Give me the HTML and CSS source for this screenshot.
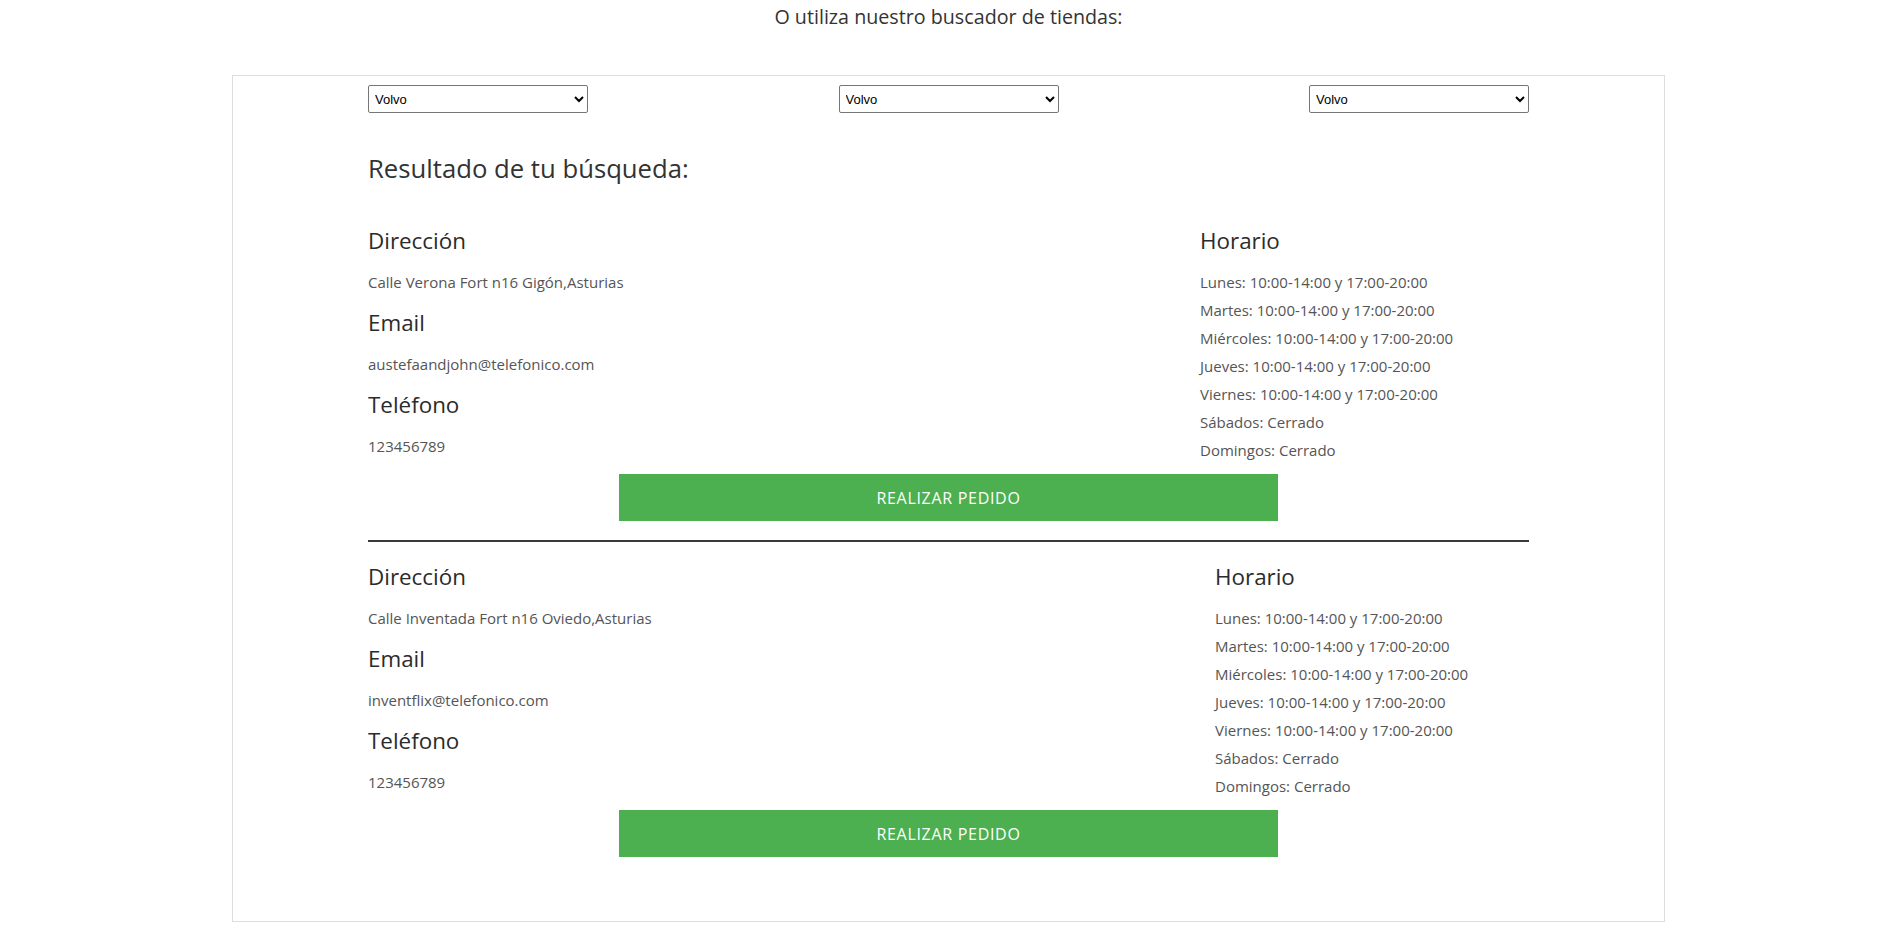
FILE: index.html
```html
<!DOCTYPE html>
<html lang="es">
<head>
<meta charset="utf-8">
<title>Buscador de tiendas</title>
<link rel="stylesheet" href="styles.css">
</head>
<body>
  <p class="intro">O utiliza nuestro buscador de tiendas:</p>
  <section class="finder">
    <div class="finder-inner">
      <div class="filters">
        <select class="filter"><option>Volvo</option><option>Saab</option></select>
        <select class="filter"><option>Volvo</option><option>Saab</option></select>
        <select class="filter"><option>Volvo</option><option>Saab</option></select>
      </div>
      <h2 class="results-title">Resultado de tu búsqueda:</h2>

      <article class="store">
        <div class="store-row">
          <div class="store-info">
            <h3 class="label">Dirección</h3>
            <p class="value">Calle Verona Fort n16 Gigón,Asturias</p>
            <h3 class="label">Email</h3>
            <p class="value">austefaandjohn@telefonico.com</p>
            <h3 class="label">Teléfono</h3>
            <p class="value">123456789</p>
          </div>
          <div class="store-hours">
            <h3 class="label">Horario</h3>
            <p class="value">Lunes: 10:00-14:00 y 17:00-20:00</p>
            <p class="value">Martes: 10:00-14:00 y 17:00-20:00</p>
            <p class="value">Miércoles: 10:00-14:00 y 17:00-20:00</p>
            <p class="value">Jueves: 10:00-14:00 y 17:00-20:00</p>
            <p class="value">Viernes: 10:00-14:00 y 17:00-20:00</p>
            <p class="value">Sábados: Cerrado</p>
            <p class="value">Domingos: Cerrado</p>
          </div>
        </div>
        <button class="order-btn" type="button">REALIZAR PEDIDO</button>
      </article>

      <hr class="divider">

      <article class="store store--wide">
        <div class="store-row">
          <div class="store-info">
            <h3 class="label">Dirección</h3>
            <p class="value">Calle Inventada Fort n16 Oviedo,Asturias</p>
            <h3 class="label">Email</h3>
            <p class="value">inventflix@telefonico.com</p>
            <h3 class="label">Teléfono</h3>
            <p class="value">123456789</p>
          </div>
          <div class="store-hours">
            <h3 class="label">Horario</h3>
            <p class="value">Lunes: 10:00-14:00 y 17:00-20:00</p>
            <p class="value">Martes: 10:00-14:00 y 17:00-20:00</p>
            <p class="value">Miércoles: 10:00-14:00 y 17:00-20:00</p>
            <p class="value">Jueves: 10:00-14:00 y 17:00-20:00</p>
            <p class="value">Viernes: 10:00-14:00 y 17:00-20:00</p>
            <p class="value">Sábados: Cerrado</p>
            <p class="value">Domingos: Cerrado</p>
          </div>
        </div>
        <button class="order-btn" type="button">REALIZAR PEDIDO</button>
      </article>
    </div>
  </section>
</body>
</html>
```

FILE: styles.css
```css
* {
  box-sizing: border-box;
}

body {
  margin: 0;
  padding-right: 4px;
  background: #fff;
  font-family: "Open Sans", "Noto Sans", sans-serif;
  color: #333;
}

.intro {
  margin: 0;
  height: 34px;
  line-height: 34px;
  text-align: center;
  font-size: 19.7px;
  color: #333;
}

.finder {
  width: 1433px;
  margin: 41px auto 0;
  border: 1px solid #ddd;
  padding: 9px 135px 64px;
}

.finder-inner {
  display: flex;
  flex-direction: column;
}

.filters {
  display: flex;
  justify-content: space-between;
}

.filter {
  width: 220px;
  height: 28px;
  font-family: "Liberation Sans", Arial, sans-serif;
  font-size: 13px;
  color: #000;
  background: #fff;
  border: 1px solid #767676;
  border-radius: 2px;
  padding: 0 2px;
}

.results-title {
  margin: 38px 0 0;
  line-height: 36px;
  font-size: 25.7px;
  font-weight: 400;
  color: #333;
}

.store {
  display: flex;
  flex-direction: column;
  margin-top: 39px;
}

.store + .divider + .store {
  margin-top: 20px;
}

.store-row {
  display: grid;
  grid-template-columns: 832px 1fr;
}

.store--wide .store-row {
  grid-template-columns: 847px 1fr;
}

.label {
  margin: 0 0 12px;
  line-height: 30px;
  font-size: 22.4px;
  font-weight: 400;
  color: #2b2b2b;
}

.store-info .value {
  margin: 0 0 12px;
}

.value {
  margin: 0;
  line-height: 28px;
  font-size: 15px;
  color: #555;
}

.store-info .value:last-child {
  margin-bottom: 0;
}

.order-btn {
  align-self: center;
  width: 659px;
  height: 47px;
  margin-top: 10px;
  border: none;
  background: #4caf50;
  color: #fff;
  font-family: "Open Sans", "Noto Sans", sans-serif;
  font-size: 16px;
  letter-spacing: 0.7px;
  cursor: pointer;
}

.divider {
  margin: 19px 0 0;
  height: 0;
  border: none;
  border-top: 2px solid #3a3a3a;
}
```
